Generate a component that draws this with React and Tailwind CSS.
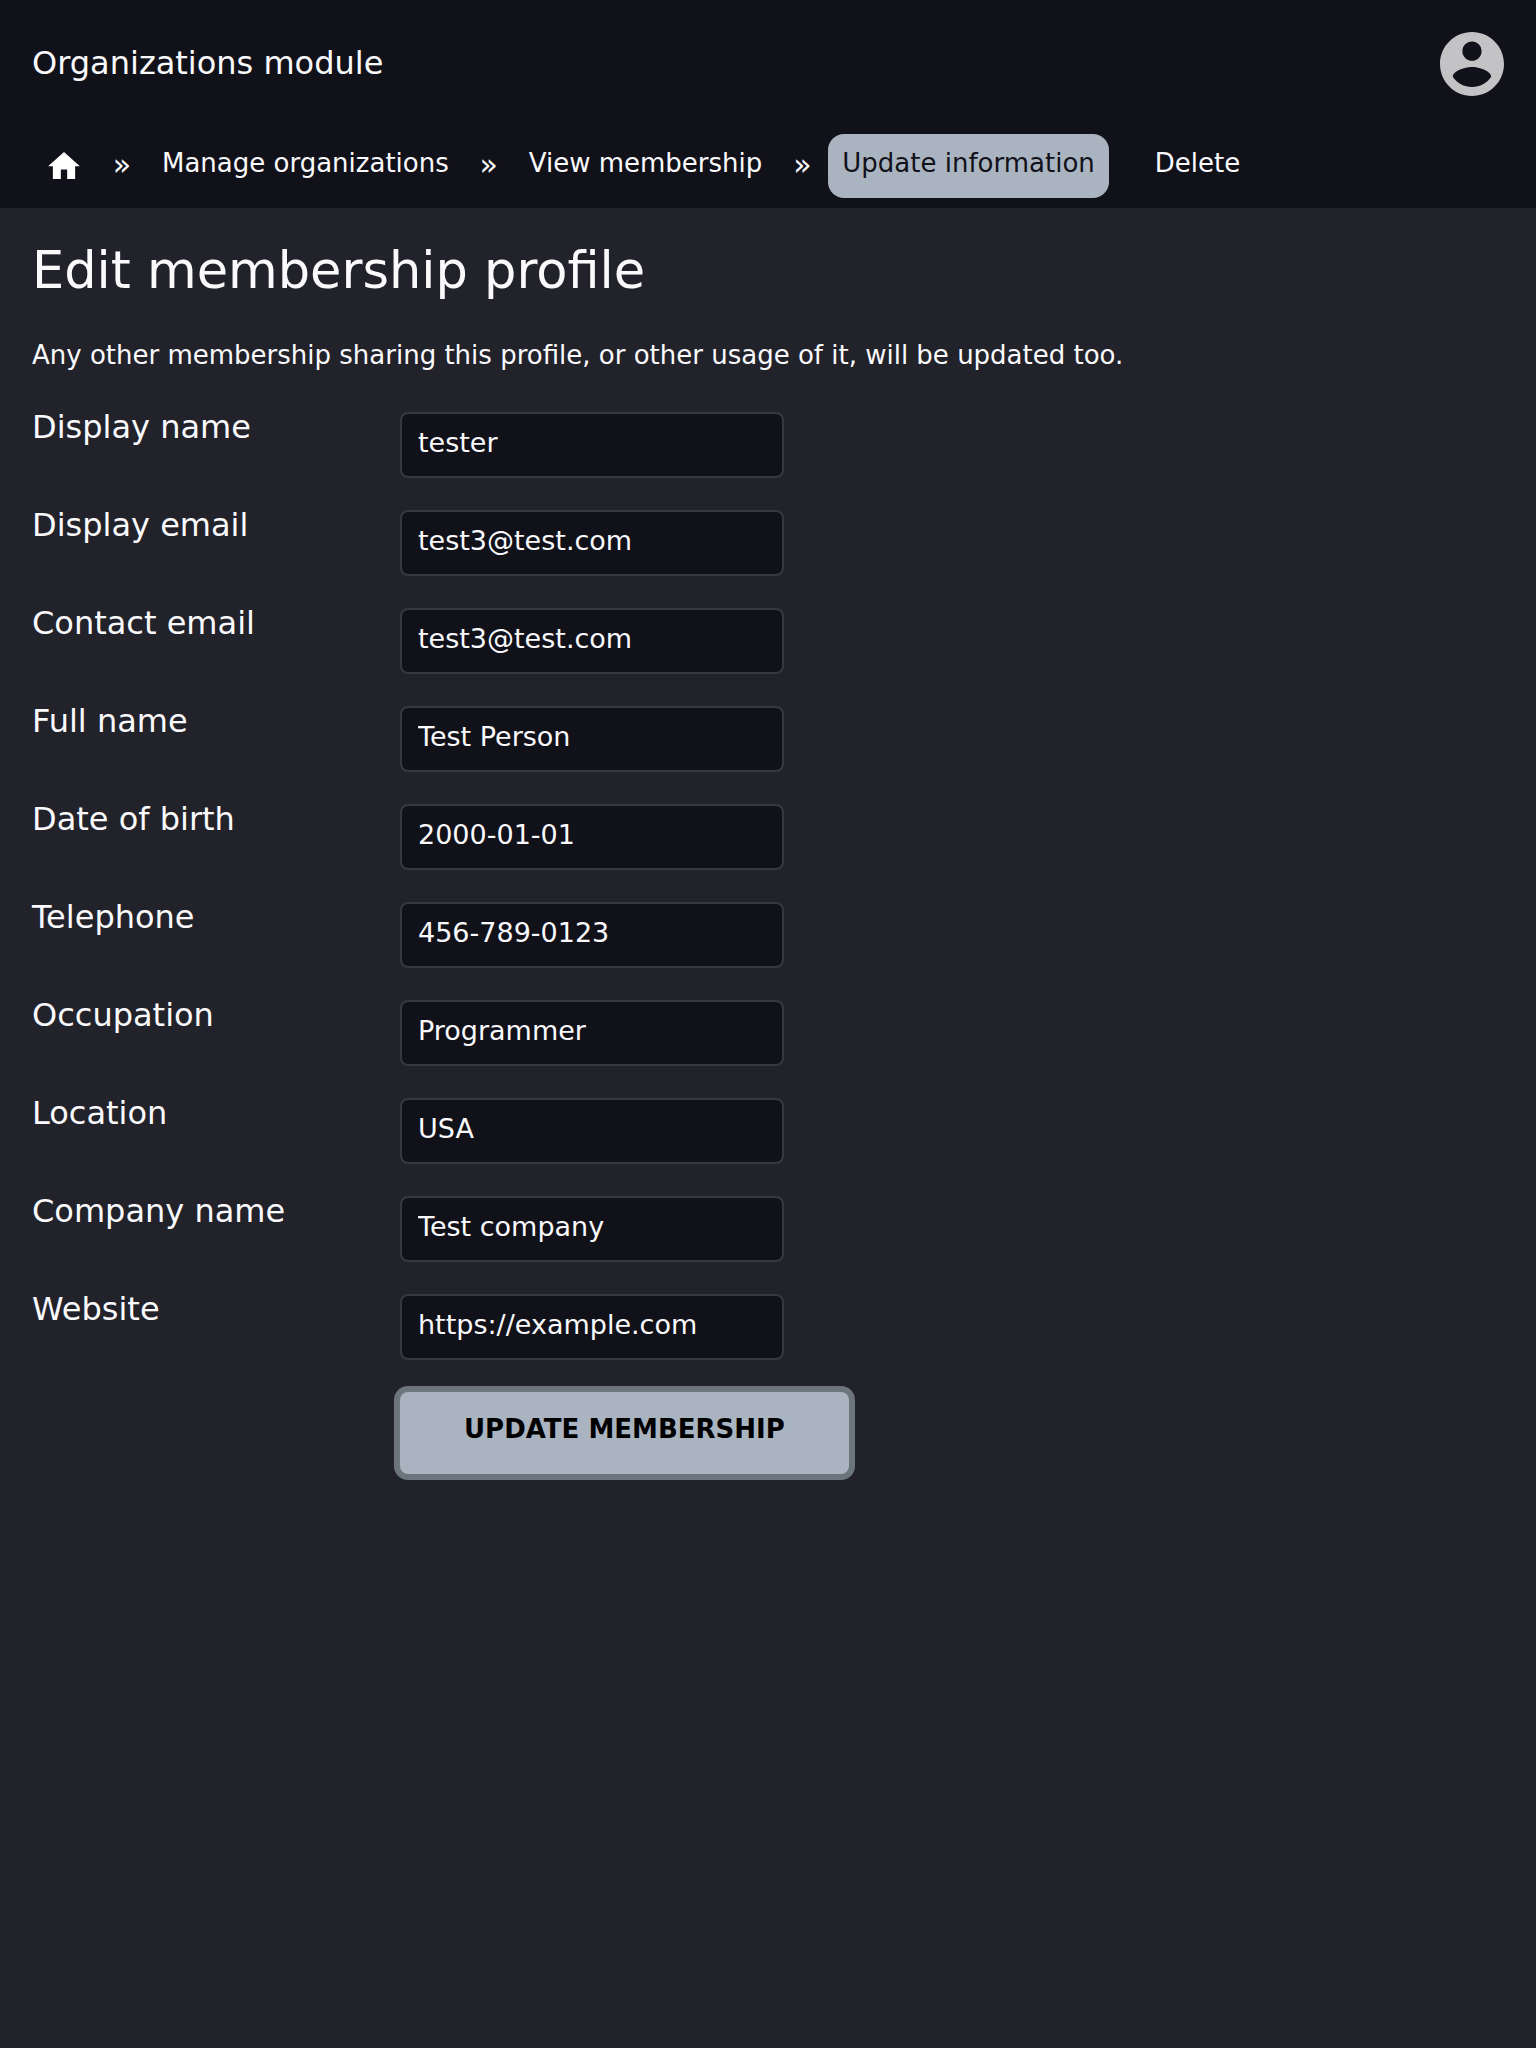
const FIELDS = [
  { id: "display-name", label: "Display name", value: "tester" },
  { id: "display-email", label: "Display email", value: "test3@test.com" },
  { id: "contact-email", label: "Contact email", value: "test3@test.com" },
  { id: "full-name", label: "Full name", value: "Test Person" },
  { id: "date-of-birth", label: "Date of birth", value: "2000-01-01" },
  { id: "telephone", label: "Telephone", value: "456-789-0123" },
  { id: "occupation", label: "Occupation", value: "Programmer" },
  { id: "location", label: "Location", value: "USA" },
  { id: "company-name", label: "Company name", value: "Test company" },
  { id: "website", label: "Website", value: "https://example.com" },
];

function Separator() {
  return (
    <li aria-hidden="true" className="w-5 pb-0.5 text-center text-[30px] leading-[62px]">
      »
    </li>
  );
}

function Crumb({ children, active }) {
  return (
    <li>
      <a
        href="#"
        aria-current={active ? "page" : undefined}
        className={
          active
            ? "flex h-16 items-center rounded-2xl bg-[#a9b4c0] px-3.5 pb-1.5 text-[#11111a]"
            : "flex h-16 items-center rounded-2xl px-3.5 pb-1.5"
        }
      >
        {children}
      </a>
    </li>
  );
}

function Header() {
  return (
    <header className="bg-[#11111a]">
      <div className="flex h-32 items-center justify-between px-8">
        <span className="pb-0.5 text-[32px] leading-[48px]">Organizations module</span>
        <button type="button" aria-label="Account" className="size-16 text-[#c3c3c5]">
          <svg viewBox="2 2 20 20" fill="currentColor" className="size-16">
            <path d="M12 2C6.48 2 2 6.48 2 12s4.48 10 10 10 10-4.48 10-10S17.52 2 12 2zm0 3c1.66 0 3 1.34 3 3s-1.34 3-3 3-3-1.34-3-3 1.34-3 3-3zm0 14.2c-2.5 0-4.71-1.28-6-3.22.03-1.99 4-3.08 6-3.08 1.99 0 5.97 1.09 6 3.08-1.29 1.94-3.5 3.22-6 3.22z" />
          </svg>
        </button>
      </div>
      <nav aria-label="Breadcrumb" className="px-8 pt-1.5 pb-2.5">
        <ul className="flex items-center gap-4 whitespace-nowrap text-[26px]">
          <li>
            <a href="#" aria-label="Home" className="flex size-16 items-center justify-center pb-0.5">
              <svg viewBox="2 3 20 17" fill="white" className="h-[27px] w-8">
                <path d="M10 20v-6h4v6h5v-8h3L12 3 2 12h3v8z" />
              </svg>
            </a>
          </li>
          <Separator />
          <Crumb>Manage organizations</Crumb>
          <Separator />
          <Crumb>View membership</Crumb>
          <Separator />
          <Crumb active>Update information</Crumb>
          <li className="ml-4">
            <a href="#" className="flex h-16 items-center px-3.5 pb-1.5">
              Delete
            </a>
          </li>
        </ul>
      </nav>
    </header>
  );
}

export default function App() {
  return (
    <div className="min-h-screen bg-[#22222b] font-['DejaVu_Sans',sans-serif] text-[#fafafc]">
      <Header />
      <main className="px-8 pt-8">
        <h1 className="text-[51px] leading-[62px]">Edit membership profile</h1>
        <p className="mt-[34px] text-[26px] leading-[38px]">
          Any other membership sharing this profile, or other usage of it, will be updated too.
        </p>
        <form className="mt-[38px]" onSubmit={(e) => e.preventDefault()}>
          <div className="flex flex-col gap-8">
            {FIELDS.map((f) => (
              <div key={f.id} className="flex items-start">
                <label htmlFor={f.id} className="w-[368px] shrink-0 text-[32px] leading-[30px]">
                  {f.label}
                </label>
                <input
                  id={f.id}
                  type="text"
                  defaultValue={f.value}
                  className="h-[66px] w-96 rounded-lg border-2 border-[#343a40] bg-[#11111a] px-4 pb-1.5 text-[27px] outline-none"
                />
              </div>
            ))}
          </div>
          <button
            type="submit"
            className="mt-8 ml-[368px] rounded-lg bg-[#a9b4c0] px-16 pt-[18px] pb-[26px] text-[26px] leading-[38px] font-bold text-black ring-6 ring-[#6c757d]"
          >
            UPDATE MEMBERSHIP
          </button>
        </form>
      </main>
    </div>
  );
}
